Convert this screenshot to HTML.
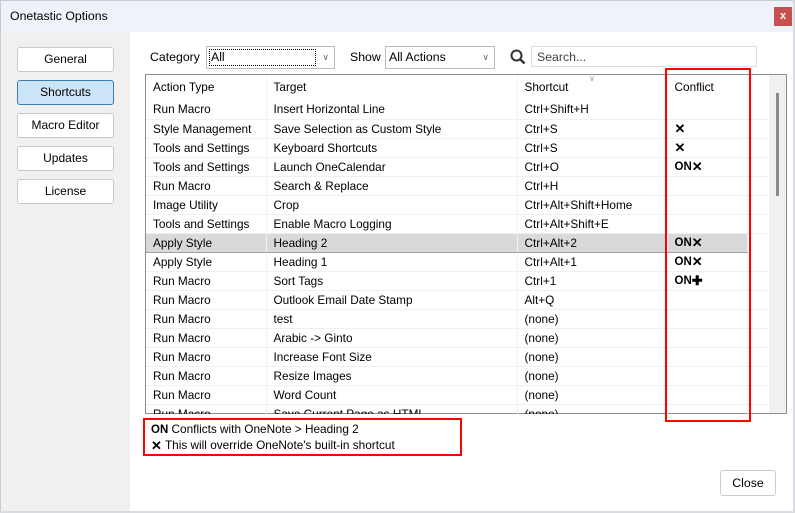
<!DOCTYPE html>
<html><head><style>
*{box-sizing:border-box;margin:0;padding:0}
body{width:795px;height:513px;position:relative;overflow:hidden;background:#fff;font-family:"Liberation Sans",sans-serif;font-size:12px;color:#000}
.abs{position:absolute}
.btn{position:absolute;left:17px;width:97px;height:25px;border:1px solid #c8c8c8;border-radius:3px;background:#fff;text-align:center;line-height:23px;font-size:12px}
.sel{background:#cce4f7;border-color:#3c7fb1}
table{border-collapse:collapse;position:absolute;left:146px;top:75px;width:622px;table-layout:fixed}
td{height:19px;padding:0 0 0 7px;white-space:nowrap;overflow:hidden;border-bottom:1px solid #eef0f4;font-size:11.8px;line-height:18px}
td.c1,td.c2,td.c3{border-right:1px solid #f0f3f8}
td.c4{font-weight:bold;font-size:11.5px;border-right:1px solid #f0f3f8}
tr.h td{height:24px;line-height:25px;border-bottom:none}
tr.hl td{background:#d9d9d9;border-top:1px solid #a0a0a0;border-bottom:1px solid #a0a0a0}
.x{font-size:13px;line-height:10px;display:inline-block;vertical-align:-1px}
</style></head><body>
<div class="abs" style="left:0;top:0;width:795px;height:32px;background:#eef2f9;border:1px solid #c8ccd2;border-bottom:none"></div>
<div class="abs" style="left:10px;top:9px;font-size:12.3px">Onetastic Options</div>
<div class="abs" style="left:774px;top:7px;width:18px;height:19px;background:#c75050;color:#fff;font-size:11px;font-weight:bold;text-align:center;line-height:18px">x</div>
<div class="abs" style="left:0;top:32px;width:130px;height:481px;background:#f0f0f0;border-left:1px solid #c8ccd2"></div>
<div class="abs" style="left:793px;top:0;width:2px;height:513px;background:#d8dbe0"></div>
<div class="abs" style="left:0;top:511px;width:795px;height:2px;background:#d8dbe0"></div>
<div class="btn" style="top:47px">General</div>
<div class="btn sel" style="top:80px">Shortcuts</div>
<div class="btn" style="top:113px">Macro Editor</div>
<div class="btn" style="top:146px">Updates</div>
<div class="btn" style="top:179px">License</div>

<div class="abs" style="left:150px;top:50px;font-size:12.3px">Category</div>
<div class="abs" style="left:206px;top:46px;width:129px;height:23px;border:1px solid #bbb;background:#fff"><div style="position:absolute;left:2px;top:2px;width:107px;height:17px;border:1px dotted #000;padding-left:1px;line-height:15px;font-size:12.3px">All</div><div style="position:absolute;right:5px;top:5px;color:#666;font-size:9px">&#x2228;</div></div>
<div class="abs" style="left:350px;top:50px;font-size:12.3px">Show</div>
<div class="abs" style="left:385px;top:46px;width:110px;height:23px;border:1px solid #bbb;background:#fff;padding-left:3px;line-height:21px;font-size:12.3px">All Actions<div style="position:absolute;right:5px;top:4px;color:#666;font-size:9px;line-height:12px">&#x2228;</div></div>
<svg class="abs" style="left:510px;top:49px" width="16" height="16"><circle cx="6.5" cy="6.5" r="5" fill="none" stroke="#333" stroke-width="2"/><line x1="10" y1="10" x2="14.5" y2="14.5" stroke="#333" stroke-width="2.4"/></svg>
<div class="abs" style="left:531px;top:46px;width:226px;height:21px;border:1px solid #ddd;padding-left:5px;line-height:20px;color:#444;font-size:12.3px">Search...</div>

<div class="abs" style="left:145px;top:74px;width:642px;height:340px;border:1px solid #8c8c8c;overflow:hidden">
<div class="abs" style="left:623px;top:0;width:17px;height:340px;background:#f0f0f0"></div>
<div class="abs" style="left:630px;top:18px;width:3px;height:103px;background:#8a8a8a"></div>
</div>
<div class="abs" style="left:589px;top:74px;color:#999;font-size:8px">&#x2228;</div>
<table>
<colgroup><col style="width:120px"><col style="width:251px"><col style="width:150px"><col style="width:80px"><col style="width:21px"></colgroup>
<tr class="h"><td class="c1">Action Type</td><td class="c2">Target</td><td class="c3">Shortcut</td><td class="c4" style="font-weight:normal;font-size:11.8px">Conflict</td><td></td></tr>
<tr><td class="c1">Run Macro</td><td class="c2">Insert Horizontal Line</td><td class="c3">Ctrl+Shift+H</td><td class="c4"></td><td></td></tr>
<tr><td class="c1">Style Management</td><td class="c2">Save Selection as Custom Style</td><td class="c3">Ctrl+S</td><td class="c4"><span class="x">✕</span></td><td></td></tr>
<tr><td class="c1">Tools and Settings</td><td class="c2">Keyboard Shortcuts</td><td class="c3">Ctrl+S</td><td class="c4"><span class="x">✕</span></td><td></td></tr>
<tr><td class="c1">Tools and Settings</td><td class="c2">Launch OneCalendar</td><td class="c3">Ctrl+O</td><td class="c4">ON<span class="x">✕</span></td><td></td></tr>
<tr><td class="c1">Run Macro</td><td class="c2">Search &amp; Replace</td><td class="c3">Ctrl+H</td><td class="c4"></td><td></td></tr>
<tr><td class="c1">Image Utility</td><td class="c2">Crop</td><td class="c3">Ctrl+Alt+Shift+Home</td><td class="c4"></td><td></td></tr>
<tr><td class="c1">Tools and Settings</td><td class="c2">Enable Macro Logging</td><td class="c3">Ctrl+Alt+Shift+E</td><td class="c4"></td><td></td></tr>
<tr class="hl"><td class="c1">Apply Style</td><td class="c2">Heading 2</td><td class="c3">Ctrl+Alt+2</td><td class="c4">ON<span class="x">✕</span></td><td style="background:#fff;border:none"></td></tr>
<tr><td class="c1">Apply Style</td><td class="c2">Heading 1</td><td class="c3">Ctrl+Alt+1</td><td class="c4">ON<span class="x">✕</span></td><td></td></tr>
<tr><td class="c1">Run Macro</td><td class="c2">Sort Tags</td><td class="c3">Ctrl+1</td><td class="c4">ON<span class="x">✚</span></td><td></td></tr>
<tr><td class="c1">Run Macro</td><td class="c2">Outlook Email Date Stamp</td><td class="c3">Alt+Q</td><td class="c4"></td><td></td></tr>
<tr><td class="c1">Run Macro</td><td class="c2">test</td><td class="c3">(none)</td><td class="c4"></td><td></td></tr>
<tr><td class="c1">Run Macro</td><td class="c2">Arabic -&gt; Ginto</td><td class="c3">(none)</td><td class="c4"></td><td></td></tr>
<tr><td class="c1">Run Macro</td><td class="c2">Increase Font Size</td><td class="c3">(none)</td><td class="c4"></td><td></td></tr>
<tr><td class="c1">Run Macro</td><td class="c2">Resize Images</td><td class="c3">(none)</td><td class="c4"></td><td></td></tr>
<tr><td class="c1">Run Macro</td><td class="c2">Word Count</td><td class="c3">(none)</td><td class="c4"></td><td></td></tr>
<tr><td class="c1">Run Macro</td><td class="c2">Save Current Page as HTML</td><td class="c3">(none)</td><td class="c4"></td><td></td></tr>
</table>
<div class="abs" style="left:130px;top:414px;width:663px;height:97px;background:#fff"></div>
<div class="abs" style="left:665px;top:68px;width:86px;height:354px;border:2px solid #f00"></div>
<div class="abs" style="left:143px;top:418px;width:319px;height:38px;border:2px solid #f00"></div>
<div class="abs" style="left:151px;top:422px;font-size:11.8px;line-height:15px"><b style="font-size:11.5px">ON</b> Conflicts with OneNote &gt; Heading 2<br><b class="x">✕</b> This will override OneNote's built-in shortcut</div>
<div class="abs" style="left:720px;top:470px;width:56px;height:26px;border:1px solid #ccc;border-radius:3px;text-align:center;line-height:24px;font-size:12.3px">Close</div>
</body></html>
